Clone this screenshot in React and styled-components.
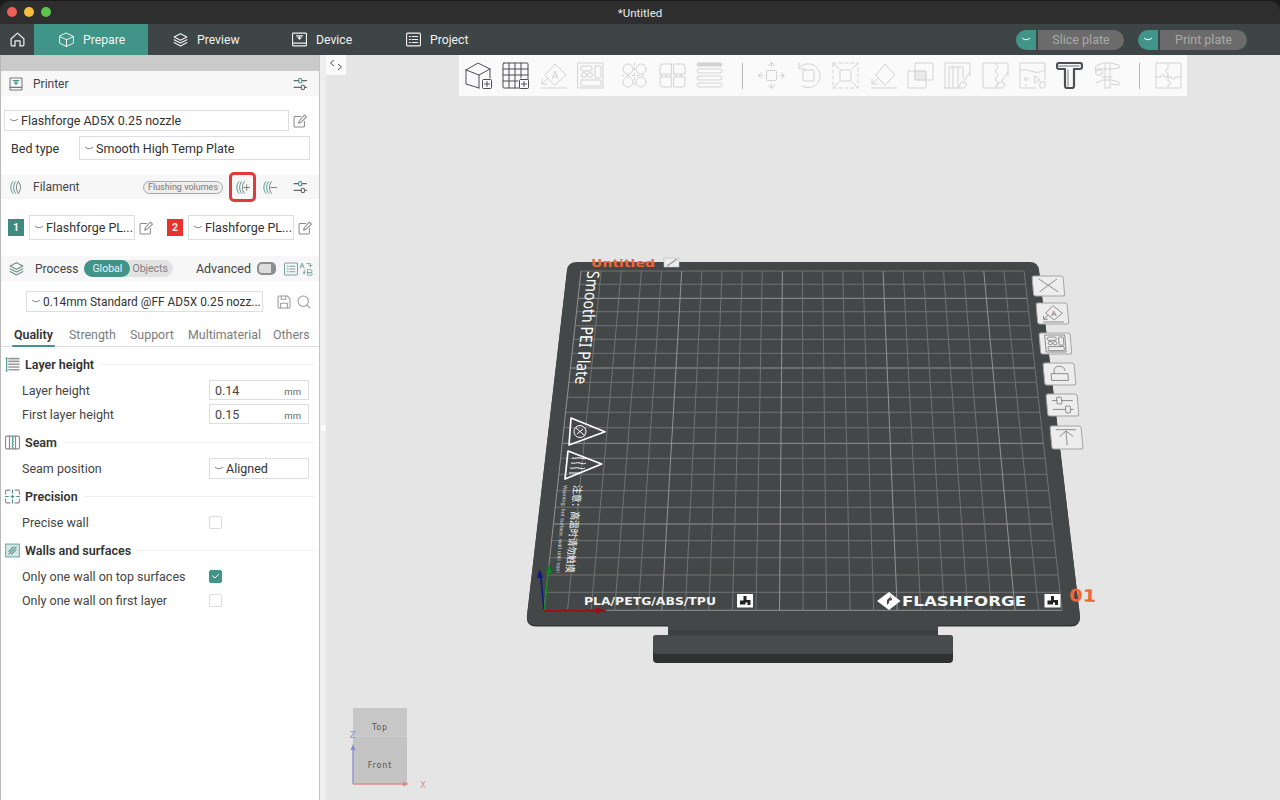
import React from "react";
import styled, { createGlobalStyle } from "styled-components";

const TEAL = "#419488";
const FONT = `Roboto, "Noto Sans", sans-serif`;

const GlobalStyle = createGlobalStyle`
  html, body { margin: 0; padding: 0; background: #1b1b1b; }
  body { font-family: ${FONT}; font-size: 12.5px; color: #333; }
`;

const Window = styled.div`
  width: 1280px;
  height: 800px;
  display: flex;
  flex-direction: column;
  overflow: hidden;
  background: #1b1b1b;
`;

/* title bar */
const TitleBar = styled.div`
  height: 23px;
  margin-top: 1px;
  flex: none;
  display: flex;
  align-items: center;
  justify-content: center;
  position: relative;
  background: #2e2e2e;
  border-radius: 10px 10px 0 0;
  color: #ececec;
  font-size: 11.5px;
`;
const Lights = styled.div`
  position: absolute;
  left: 7px;
  top: 6px;
  display: flex;
  gap: 7px;
`;
const Light = styled.span`
  width: 10px;
  height: 10px;
  border-radius: 50%;
  background: ${(p) => p.$c};
`;

/* nav bar */
const NavBar = styled.div`
  height: 31px;
  flex: none;
  display: flex;
  align-items: stretch;
  background: #3d4547;
  color: #f2f2f2;
`;
const HomeBtn = styled.div`
  width: 34px;
  display: flex;
  align-items: center;
  justify-content: center;
`;
const NavTab = styled.div`
  width: ${(p) => p.$w}px;
  display: flex;
  align-items: center;
  gap: 9px;
  padding-left: 25px;
  box-sizing: border-box;
  background: ${(p) => (p.$active ? TEAL : "transparent")};
  font-size: 12.2px;
`;
const NavActions = styled.div`
  margin-left: auto;
  padding-right: 33px;
  display: flex;
  align-items: center;
  gap: 14px;
`;
const SliceBtn = styled.div`
  display: flex;
  height: 20px;
  gap: 2px;
`;
const SliceDrop = styled.span`
  width: 20px;
  display: flex;
  align-items: center;
  justify-content: center;
  background: ${TEAL};
  border-radius: 10px 0 0 10px;
`;
const SliceLabel = styled.span`
  width: ${(p) => p.$w}px;
  display: flex;
  align-items: center;
  justify-content: center;
  background: #6b6b6b;
  color: #a9a9a9;
  border-radius: 0 10px 10px 0;
  font-size: 12.5px;
`;

/* body */
const Body = styled.div`
  flex: 1;
  display: flex;
  min-height: 0;
`;
const Panel = styled.aside`
  width: 320px;
  flex: none;
  box-sizing: border-box;
  background: #fff;
  border-left: 1px solid #b9b9b9;
  border-right: 1px solid #c4c4c4;
  display: flex;
  flex-direction: column;
`;
const TopStrip = styled.div`
  height: 16px;
  flex: none;
  background: #cacaca;
`;
const HeaderBar = styled.div`
  height: ${(p) => p.$h || 25}px;
  margin-top: ${(p) => p.$mt || 0}px;
  flex: none;
  display: flex;
  align-items: center;
  background: #f7f7f7;
  padding: 0 ${(p) => p.$pr || 12}px 0 8px;
  font-size: 12px;
  color: #444;
`;
const HeaderTitle = styled.span`
  margin-left: ${(p) => p.$ml || 11}px;
`;
const HeaderNote = styled.span`
  font-size: 12.5px;
`;
const Spacer = styled.span`
  flex: 1;
`;
const Row = styled.div`
  height: ${(p) => p.$h}px;
  margin-top: ${(p) => p.$mt || 0}px;
  padding-left: ${(p) => p.$pl || 0}px;
  flex: none;
  display: flex;
  align-items: center;
`;
const Select = styled.div`
  box-sizing: border-box;
  width: ${(p) => p.$w}px;
  height: ${(p) => p.$h || 21}px;
  margin-left: ${(p) => p.$ml || 0}px;
  flex: none;
  display: flex;
  align-items: center;
  gap: 2px;
  padding-left: 4px;
  border: 1px solid #dedede;
  background: #fff;
  color: #333;
  font-size: ${(p) => p.$fs || 12.5}px;
  white-space: nowrap;
  overflow: hidden;
`;
const BedLabel = styled.span`
  width: 68px;
  padding-left: 10px;
  box-sizing: border-box;
  flex: none;
  color: #333;
`;
const FlushPill = styled.span`
  box-sizing: border-box;
  width: 80px;
  height: 13px;
  display: flex;
  align-items: center;
  justify-content: center;
  border: 1px solid #a8a8a8;
  border-radius: 7px;
  background: #eee;
  color: #777;
  font-size: 9px;
  white-space: nowrap;
`;
const HighlightBtn = styled.span`
  box-sizing: border-box;
  width: 27px;
  height: 30px;
  margin-left: 6px;
  display: flex;
  align-items: center;
  justify-content: center;
  border: 3px solid #e23a3c;
  border-radius: 5px;
`;
const ColorBadge = styled.span`
  width: 16px;
  height: 17px;
  flex: none;
  display: flex;
  align-items: center;
  justify-content: center;
  background: ${(p) => p.$c};
  color: #f4f4f4;
  font-size: 10.5px;
  font-weight: 700;
  margin-left: ${(p) => p.$ml || 0}px;
`;
const ScopeSwitch = styled.span`
  width: 89px;
  height: 17px;
  margin-left: 6px;
  display: flex;
  align-items: center;
  border-radius: 9px;
  background: #e2e2e2;
  color: #808080;
  font-size: 10.5px;
`;
const ScopeOn = styled.span`
  width: 46px;
  height: 17px;
  display: flex;
  align-items: center;
  justify-content: center;
  border-radius: 9px;
  background: ${TEAL};
  color: #eef;
`;
const ScopeOff = styled.span`
  padding-left: 2px;
`;
const Toggle = styled.span`
  box-sizing: border-box;
  width: 19px;
  height: 13px;
  margin: 0 8px 0 6px;
  border-radius: 5px;
  background: #dcdcdc;
  border: solid #8e8e8e;
  border-width: 2px 5px 2px 2px;
`;
const Tabs = styled.div`
  box-sizing: border-box;
  height: 22px;
  margin-top: 13px;
  flex: none;
  border-bottom: 1px solid #dcdcdc;
  position: relative;
`;
const Tab = styled.span`
  position: absolute;
  left: ${(p) => p.$x}px;
  top: 0;
  height: 22px;
  color: ${(p) => (p.$active ? "#333" : "#7c7c7c")};
  font-weight: ${(p) => (p.$active ? 600 : 400)};
  font-size: 12.4px;
  line-height: 19px;
  ${(p) => p.$active && `&::after { content: ""; position: absolute; left: -2px; right: -2px; bottom: 0; height: 2px; background: ${TEAL}; border-radius: 1px; }`}
`;
const Group = styled.div`
  margin-top: ${(p) => p.$mt}px;
  flex: none;
`;
const GroupHead = styled.div`
  height: 18px;
  display: flex;
  align-items: center;
  gap: 5px;
  padding: 0 4px;
  margin-bottom: 5px;
  font-weight: 600;
  font-size: 12.5px;
  color: #333;
  &::after {
    content: "";
    flex: 1;
    height: 1px;
    background: #f0f0f0;
    margin-left: 1px;
  }
`;
const OptionRow = styled.div`
  height: 24px;
  display: flex;
  align-items: center;
  padding-left: 21px;
`;
const OptionLabel = styled.span`
  width: 187px;
  flex: none;
  color: #444;
  font-size: 12.5px;
`;
const NumberField = styled.span`
  box-sizing: border-box;
  width: 100px;
  height: 20px;
  display: flex;
  align-items: center;
  justify-content: space-between;
  padding: 0 7px 0 5px;
  border: 1px solid #dedede;
  color: #444;
`;
const Unit = styled.span`
  font-size: 9.5px;
  color: #666;
  margin-top: 3px;
`;
const CheckBox = styled.span`
  box-sizing: border-box;
  width: 13px;
  height: 13px;
  display: flex;
  align-items: center;
  justify-content: center;
  border-radius: 2px;
  border: 1px solid ${(p) => (p.$on ? TEAL : "#dcdcdc")};
  background: ${(p) => (p.$on ? TEAL : "#fff")};
`;

/* viewport */
const Sash = styled.div`
  width: 6px;
  flex: none;
  background: #eeeeee;
  display: flex;
  align-items: center;
  justify-content: center;
`;
const SashGrip = styled.span`
  width: 5px;
  height: 6px;
  background: #fbfbfb;
  border-radius: 1px;
`;
const Viewport = styled.main`
  flex: 1;
  position: relative;
  background: #e5e5e5;
`;
const Scene = styled.svg`
  position: absolute;
  left: -6px;
  top: 0;
  width: 960px;
  height: 745px;
  display: block;
`;
const CollapseBtn = styled.div`
  position: absolute;
  left: 0;
  top: 0;
  width: 20px;
  height: 20px;
  background: #fafafa;
  display: flex;
  align-items: center;
  justify-content: center;
`;
const Toolbar = styled.div`
  position: absolute;
  left: 133px;
  top: 0;
  width: 728px;
  height: 41px;
  display: flex;
  align-items: center;
  background: #fafafa;
  padding-left: 1px;
  box-sizing: border-box;
`;
const ToolSlot = styled.span`
  width: 37.3px;
  flex: none;
  display: flex;
  justify-content: center;
  color: ${(p) => (p.$on ? "#4a4f50" : "#d3d3d3")};
  margin-left: ${(p) => p.$ml || 0}px;
`;
const ToolSep = styled.span`
  width: 1px;
  height: 26px;
  flex: none;
  background: #b8b8b8;
  margin: 0 ${(p) => p.$mr}px 0 ${(p) => p.$ml}px;
`;
const IconGap = styled.span`
  margin-left: ${(p) => p.$ml || 4}px;
  display: flex;
`;
const SectionIcon = styled.span`
  width: 15px;
  height: 15px;
  flex: none;
  display: flex;
`;

/* icons */
const Ico = ({ s = 14, vb = 27, c = "#666", w = 2, children }) => (
  <svg width={s} height={s} viewBox={`0 0 ${vb} ${vb}`} fill="none" stroke={c} strokeWidth={w} strokeLinecap="round" strokeLinejoin="round" style={{ flex: "none", display: "block" }}>
    {children}
  </svg>
);
const Chevron = ({ c = "#888" }) => (
  <svg width="10" height="5" viewBox="0 0 10 5" fill="none" stroke={c} strokeWidth="1" style={{ flex: "none" }}>
    <path d="M1 1 Q5 4.5 9 1" />
  </svg>
);
const Sliders = () => (
  <Ico s={14}>
    <path d="M2 7h9M18 7h8M2 20h14M23 20h3" />
    <rect x="11" y="3" width="6" height="8" rx="2" stroke="#419488" />
    <rect x="16" y="16" width="6" height="8" rx="2" />
  </Ico>
);
const EditIco = () => (
  <Ico s={14} c="#8a8a8a">
    <path d="M22 14v9a2 2 0 0 1-2 2H4a2 2 0 0 1-2-2V7a2 2 0 0 1 2-2h11" />
    <path d="M11 18l1-5L22 2l4 4-11 10z" />
  </Ico>
);
const Filaments = ({ plus, minus }) => (
  <Ico s={15} c="#777" w={1.7}>
    <path d="M7 3C2 9 2 18 7 24" stroke="#419488" />
    <path d="M12 3C7 9 7 18 12 24" stroke="#419488" />
    <path d="M17 3c-5 6-5 15 0 21" />
    {plus && <path d="M16 13.5h10M21 8.5v10" />}
    {minus && <path d="M16 13.5h10" />}
    {!plus && !minus && <path d="M17 3c5 6 5 15 0 21" />}
  </Ico>
);

const CubeAdd = () => (
  <>
    <path d="M1 8L13 1l12 6v9M1 8l13 5v13M14 13l11-6M1 8v14l13 4" />
    <rect x="17.5" y="17.5" width="9" height="9" rx="1" fill="#fafafa" />
    <path d="M19.5 22h5M22 19.5v5" />
  </>
);
const GridAdd = () => (
  <>
    <rect x="1" y="1" width="25" height="25" rx="1" />
    <path d="M1 7h25M1 13h25M1 19h15M7 1v25M13 1v25M19 1v15" />
    <rect x="17.5" y="17.5" width="9" height="9" rx="1" fill="#fafafa" />
    <path d="M19.5 22h5M22 19.5v5" />
  </>
);
const Orient = () => (
  <>
    <path d="M5 13L15 2l11 11-11 10z" />
    <text x="15" y="17" fontSize="10" textAnchor="middle" fill="currentColor" stroke="none" fontFamily="Liberation Sans">A</text>
    <path d="M8 16l-6 6M2 17v5h5M1 26h26" />
  </>
);
const Arrange = () => (
  <>
    <rect x="1" y="1" width="25" height="25" />
    <rect x="4" y="4" width="11" height="5" rx="2" />
    <rect x="18" y="4" width="6" height="12" rx="1" />
    <circle cx="7" cy="13" r="2.5" />
    <circle cx="13" cy="13" r="2.5" />
    <rect x="4" y="18" width="20" height="6" rx="1" />
  </>
);
const SplitObjects = () => (
  <>
    <circle cx="7" cy="7" r="5" />
    <circle cx="20" cy="7" r="5" />
    <circle cx="7" cy="20" r="5" />
    <circle cx="20" cy="20" r="5" />
    <path d="M1 13.5h25M13.5 1v25" strokeDasharray="2 3" />
  </>
);
const SplitParts = () => (
  <>
    <path d="M12 2H4a3 3 0 0 0-3 3v7h11zM15 2h8a3 3 0 0 1 3 3v7H15zM12 15H1v7a3 3 0 0 0 3 3h8zM15 15h11v7a3 3 0 0 1-3 3h-8z" />
    <path d="M1 13.5h25" strokeDasharray="2 3" />
  </>
);
const LayerBars = () => (
  <>
    <rect x="1" y="1" width="25" height="3" rx="1.5" fill="currentColor" />
    <rect x="1" y="7" width="25" height="4" rx="2" />
    <rect x="1" y="14" width="25" height="4" rx="2" />
    <rect x="1" y="21" width="25" height="4" rx="2" />
  </>
);
const Move = () => (
  <>
    <rect x="8.5" y="8.5" width="10" height="10" rx="1" />
    <path d="M13.5 5V1M10.5 3.5l3-3 3 3M13.5 22v4M10.5 23.5l3 3 3-3M5 13.5H1M3.5 10.5l-3 3 3 3M22 13.5h4M23.5 10.5l3 3-3 3" />
  </>
);
const Rotate = () => (
  <>
    <path d="M4 6A12 12 0 1 1 7 24" />
    <path d="M3 19v0M1.5 14v0" strokeDasharray="1 3" />
    <path d="M4 1v6h6" />
    <rect x="8" y="8" width="11" height="11" rx="1" />
  </>
);
const Scale = () => (
  <>
    <rect x="8" y="8" width="11" height="11" rx="1" />
    <path d="M1 1h25v25H1z" strokeDasharray="3 3" />
    <path d="M1 1l6 6M26 1l-6 6M1 26l6-6M26 26l-6-6" />
  </>
);
const LayFlat = () => (
  <>
    <path d="M6 13L15 2l10 11-10 10z" />
    <path d="M8 16l-6 6M2 17v5h5M1 26h26" />
  </>
);
const Overlap = () => (
  <>
    <rect x="8" y="1" width="18" height="17" rx="1" />
    <rect x="1" y="9" width="18" height="17" rx="1" />
    <rect x="8" y="9" width="11" height="9" fill="currentColor" opacity=".4" />
  </>
);
const Brush = () => <path d="M26 10l-6 9M18 20c-2 1-2 4-4 6h6c2-1 3-3 2-5z" />;
const SupportPaint = () => (
  <>
    <path d="M1 26V1h25v13" />
    <path d="M5 26V5h14v12M9 5v21M14 5v21M1 26h13" />
    <Brush />
  </>
);
const SeamPaint = () => (
  <>
    <path d="M14 26H1V1h25v13" />
    <path d="M13 1l3 4-3 4 3 4-3 4 3 4-3 4" />
    <Brush />
  </>
);
const TerrainPaint = () => (
  <>
    <path d="M17 26H1V1h25v17" />
    <path d="M1 9c8-5 14 6 25-1" />
    <circle cx="7" cy="17" r="1.5" />
    <path d="M16 14l5 4-5 3zM6 23h2" />
    <rect x="21" y="20" width="5" height="6" rx="1" />
  </>
);
const TextTool = () => (
  <>
    <path d="M3 1h21a2 2 0 0 1 2 2v2a2 2 0 0 1-2 2h-6v17a2 2 0 0 1-2 2h-5a2 2 0 0 1-2-2V7H3a2 2 0 0 1-2-2V3a2 2 0 0 1 2-2z" strokeWidth="2.2" />
    <path d="M3 4h20M12 8v16" stroke="#9b9b9b" strokeWidth="1.3" />
  </>
);
const Caliper = () => (
  <>
    <path d="M3 4l7-3h8l8 2v3l-8 1H10L3 9zM3 21l7-3h8l8 2v3l-8-1" />
    <circle cx="6" cy="10" r="3.5" />
    <path d="M12 1v25M17 1v25M12 26h5M9 15h10" />
  </>
);
const Puzzle = () => (
  <>
    <rect x="1" y="1" width="25" height="25" rx="1" />
    <path d="M13 1v6c-3-1-3 5 0 4v4h4c-1 3 4 3 3 0h6M13 15H9c1-3-4-3-3 0H1M13 15v4c3-1 3 5 0 4v3" />
  </>
);
const XMark = () => <path d="M2 3l23 19M25 3L2 22" />;
const Lock = () => (
  <>
    <path d="M7 13V9a7 7 0 0 1 14 0" />
    <path d="M3 13h21v10H3z" />
  </>
);
const PlateSliders = () => (
  <>
    <path d="M1 7h6M13 7h14M1 20h16M23 20h4" />
    <rect x="7" y="2" width="6" height="10" rx="1" />
    <rect x="17" y="15" width="6" height="10" rx="1" />
  </>
);
const Upload = () => <path d="M1 2h25M13.5 25V4M5 12l8.5-8L22 12" />;

const TOOLS_A = [CubeAdd, GridAdd, Orient, Arrange];
const TOOLS_B = [SplitObjects, SplitParts, LayerBars];
const TOOLS_C = [Move, Rotate, Scale, LayFlat, Overlap, SupportPaint, SeamPaint, TerrainPaint, TextTool, Caliper];

const Tool = ({ icon: Icon, on, ml }) => (
  <ToolSlot $on={on} $ml={ml}>
    <svg width="27" height="27" viewBox="0 0 27 27" fill="none" stroke="currentColor" strokeWidth={1} strokeLinecap="round" strokeLinejoin="round" style={{ display: "block" }}>
      <Icon />
    </svg>
  </ToolSlot>
);

/* plate geometry, page coordinates */
const ROW_Y = [271, 284.3, 298.3, 311.7, 325.7, 339.3, 353.3, 368, 382.3, 397.3, 412.3, 427.7, 443.3, 458.3, 474.3, 490.7, 507.3, 524, 540.7, 557.7, 575, 592.3, 610.3];
const leftAt = (y) => 581 - ((y - 271) / 339) * 37;
const rightAt = (y) => 1024 + ((y - 271) / 339) * 38;

const PLATE_TABS = [
  [1032, 276, 20, XMark],
  [1036, 303, 21, Orient],
  [1039, 333, 21, Arrange],
  [1043, 363, 22, Lock],
  [1046, 394, 22, PlateSliders],
  [1050, 426, 23, Upload],
];
const PLATE_OUTLINE = "M577 262H1030Q1038 262 1039 270L1080 616Q1080 625 1071 625H536Q526 625 527 615L567 270Q568 262 577 262Z";

const QrMark = ({ x, y }) => (
  <g transform={`translate(${x} ${y})`}>
    <rect width="16" height="13.5" fill="#fff" />
    <path d="M6.5 2h3v4h4v5h-3V8.5h-2v2H3v-4h3.5z" fill="#222" />
  </g>
);

const PlateScene = () => (
  <Scene viewBox="320 55 960 745">
    {/* stand */}
    <rect x="653" y="635" width="300" height="28" rx="4" fill="#2f3030" />
    <rect x="653" y="635" width="300" height="19" rx="3" fill="#484b4b" />
    {/* plate */}
    <path d={PLATE_OUTLINE} transform="translate(0 1.5)" fill="#323434" />
    <path d={PLATE_OUTLINE} fill="#444747" />
    <rect x="668" y="620" width="270" height="15.5" fill="#444747" />
    <rect x="668" y="630" width="270" height="5.5" fill="#3d4040" />
    {ROW_Y.map((y, i) => (
      <line key={i} x1={leftAt(y)} y1={y} x2={rightAt(y)} y2={y} stroke={i % 5 === 2 ? "#929494" : "#707373"} strokeWidth="1" />
    ))}
    {Array.from({ length: 23 }, (_, i) => (
      <line key={i} x1={581 + i * 20.14} y1="271" x2={544 + i * 23.55} y2="610.3" stroke={i % 5 === 0 ? "#929494" : "#707373"} strokeWidth="1" />
    ))}
    {/* plate side tabs */}
    {PLATE_TABS.map(([x, y, h, Icon]) => (
      <g key={y} transform={`translate(${x} ${y}) skewX(5)`}>
        <rect width="31" height={h} rx="2" fill="#ededed" stroke="#a5a5a5" />
        <g transform={`translate(${(31 - 27 * 0.8) / 2} ${(h - 27 * 0.68) / 2}) scale(.8 .68)`} fill="none" stroke="#6e6e6e" strokeWidth="1" color="#6e6e6e">
          <Icon />
        </g>
      </g>
    ))}
    {/* printed labels */}
    <text x="591" y="267" fill="#f0683a" fontFamily="DejaVu Sans" fontWeight="700" fontSize="11" textLength="64" lengthAdjust="spacingAndGlyphs">Untitled</text>
    <g transform="translate(664 258)">
      <rect width="15" height="9" fill="#ededed" stroke="#bbb" strokeWidth=".6" />
      <path d="M3 8L13 1" stroke="#999" strokeWidth="1.5" />
    </g>
    <text transform="matrix(-.11 .994 -1 0 587.5 271)" fill="#fff" fontFamily="Noto Sans" fontSize="17" textLength="114" lengthAdjust="spacingAndGlyphs">Smooth PEI Plate</text>
    <path d="M571 418L605 431.7 569 445z" fill="none" stroke="#fff" strokeWidth="1.7" strokeLinejoin="round" />
    <circle cx="580" cy="431.5" r="6" fill="none" stroke="#fff" />
    <path d="M576 428l8 7M577 434l6-5" stroke="#fff" />
    <path d="M568 451L601.7 464 565 479z" fill="none" stroke="#fff" strokeWidth="1.7" strokeLinejoin="round" />
    <path d="M572 458c3 1 6-1 9 0s4 1 6 0M571 463c3 1 6-1 9 0s4 1 6 0M570 468c3 1 6-1 9 0s4 1 6 0M569 473h11" fill="none" stroke="#fff" />
    <text transform="matrix(-.09 .996 -1 0 574 485)" fill="#f5f5f5" fontFamily="Noto Sans CJK SC" fontSize="10.5" textLength="88" lengthAdjust="spacingAndGlyphs">注意：高温时请勿触摸</text>
    <text transform="matrix(-.085 .996 -1 0 563.5 485)" fill="#d5d5d5" fontFamily="Liberation Sans" fontSize="5.5" textLength="88" lengthAdjust="spacingAndGlyphs">Warning: hot surface, wait until cool</text>
    <text x="584" y="605" fill="#f2f2f2" fontFamily="DejaVu Sans" fontWeight="700" fontSize="10.5" textLength="132" lengthAdjust="spacingAndGlyphs">PLA/PETG/ABS/TPU</text>
    <QrMark x="737" y="594" />
    <QrMark x="1044.5" y="594" />
    <path d="M889 592L900.5 601 889 610 877 601z" fill="#fff" />
    <path d="M892 595l-5 5v5l2-2v-2l3-1v-2l-2 .5z" fill="#444747" />
    <text x="902" y="606" fill="#f5f5f5" fontFamily="DejaVu Sans" fontWeight="700" fontSize="13.5" textLength="124" lengthAdjust="spacingAndGlyphs">FLASHFORGE</text>
    <text transform="translate(1069 601) rotate(2)" fill="#f0683a" fontFamily="DejaVu Sans" fontWeight="700" fontSize="17" textLength="27" lengthAdjust="spacingAndGlyphs">01</text>
    {/* bed axes */}
    <path d="M544 610.5H600" stroke="#9a0f14" strokeWidth="1.8" />
    <path d="M607 610.5L596 607.5V613.5z" fill="#9a0f14" />
    <path d="M544 610L540.5 575" stroke="#0c1a80" strokeWidth="1.5" />
    <path d="M539.5 569L537 578H543z" fill="#0c1a80" />
    <path d="M544.5 610L548.5 570" stroke="#0b8a1f" strokeWidth="1.5" />
    <path d="M549 564L546 573H552z" fill="#0b8a1f" />
    {/* view cube */}
    <rect x="353" y="708" width="54" height="28.5" fill="#c7c7c7" />
    <rect x="353" y="736.5" width="54" height="47" fill="#c4c4c4" />
    <text x="380" y="730" textAnchor="middle" fontFamily="DejaVu Sans" fontSize="8" fill="#555" letterSpacing=".9">Top</text>
    <text x="380" y="768" textAnchor="middle" fontFamily="DejaVu Sans" fontSize="8" fill="#555" letterSpacing=".9">Front</text>
    <path d="M353 784V747" stroke="#8a8ed0" strokeWidth="1.3" />
    <path d="M353 744l-2.5 6h5z" fill="#8a8ed0" />
    <path d="M353 784H405" stroke="#d98a8a" strokeWidth="1.3" />
    <path d="M409 784l-6-2.5v5z" fill="#d98a8a" />
    <text x="352.5" y="738" textAnchor="middle" fontFamily="DejaVu Sans" fontSize="8" fill="#8a8ed0">Z</text>
    <text x="423" y="788" textAnchor="middle" fontFamily="DejaVu Sans" fontSize="8" fill="#d98a8a">X</text>
  </Scene>
);

const LayersGlyph = ({ c }) => (
  <Ico s={15} c={c}>
    <path d="M13.5 3L25 9l-11.5 6L2 9z" />
    <path d="M2 14l11.5 6L25 14M2 19l11.5 6L25 19" />
  </Ico>
);

const FilamentSlot = ({ n, color, ml, left }) => (
  <>
    <ColorBadge $c={color} $ml={ml}>{n}</ColorBadge>
    <Select $w={106} $h={25} $ml={left}>
      <Chevron />
      <span>Flashforge PL...</span>
    </Select>
    <IconGap><EditIco /></IconGap>
  </>
);

const App = () => (
  <Window>
    <GlobalStyle />
    <TitleBar>
      <Lights>
        <Light $c="#ee5f57" />
        <Light $c="#f6bd3b" />
        <Light $c="#5fc44f" />
      </Lights>
      *Untitled
    </TitleBar>

    <NavBar>
      <HomeBtn>
        <Ico s={15} c="#f0f0f0" w={2.2}>
          <path d="M2 12L13.5 2 25 12v11a2 2 0 0 1-2 2h-5v-9H9v9H4a2 2 0 0 1-2-2z" />
        </Ico>
      </HomeBtn>
      <NavTab $active $w={114}>
        <Ico s={15} c="#f3f3f3" w={1.8}>
          <path d="M13.5 2L26 8v12l-12.5 6L1 20V8zM1 8l12.5 6L26 8M13.5 14v12" />
        </Ico>
        Prepare
      </NavTab>
      <NavTab $w={119}>
        <LayersGlyph c="#f0f0f0" />
        Preview
      </NavTab>
      <NavTab $w={114}>
        <Ico s={15} c="#f0f0f0" w={2}>
          <rect x="1" y="2" width="25" height="23" rx="1" />
          <path d="M1 20h25M8 7h11M13.5 7v6l-3-3M13.5 13l3-3" />
        </Ico>
        Device
      </NavTab>
      <NavTab $w={120}>
        <Ico s={15} c="#f0f0f0" w={2}>
          <rect x="1" y="2" width="25" height="23" rx="2" />
          <path d="M6 8h2M11 8h10M6 13.5h2M11 13.5h10M6 19h2M11 19h10" />
        </Ico>
        Project
      </NavTab>
      <NavActions>
        <SliceBtn>
          <SliceDrop><Chevron c="#fff" /></SliceDrop>
          <SliceLabel $w={86}>Slice plate</SliceLabel>
        </SliceBtn>
        <SliceBtn>
          <SliceDrop><Chevron c="#fff" /></SliceDrop>
          <SliceLabel $w={87}>Print plate</SliceLabel>
        </SliceBtn>
      </NavActions>
    </NavBar>

    <Body>
      <Panel>
        <TopStrip />
        <HeaderBar>
          <Ico s={14} c="#777">
            <rect x="2" y="2" width="23" height="23" rx="1" />
            <path d="M2 20h23" />
            <path d="M8 7h11M13.5 7v7l-3-3M13.5 14l3-3" stroke="#419488" />
          </Ico>
          <HeaderTitle $ml={10}>Printer</HeaderTitle>
          <Spacer />
          <Sliders />
        </HeaderBar>

        <Row $h={21} $mt={14} $pl={3}>
          <Select $w={285}>
            <Chevron />
            <span>Flashforge AD5X 0.25 nozzle</span>
          </Select>
          <IconGap><EditIco /></IconGap>
        </Row>
        <Row $h={24} $mt={5}>
          <BedLabel>Bed type</BedLabel>
          <Select $w={231} $h={24} $ml={10}>
            <Chevron />
            <span>Smooth High Temp Plate</span>
          </Select>
        </Row>

        <HeaderBar $h={24} $mt={15}>
          <Filaments />
          <HeaderTitle $ml={9}>Filament</HeaderTitle>
          <Spacer />
          <FlushPill>Flushing volumes</FlushPill>
          <HighlightBtn><Filaments plus /></HighlightBtn>
          <IconGap $ml={6}><Filaments minus /></IconGap>
          <IconGap $ml={16}><Sliders /></IconGap>
        </HeaderBar>

        <Row $h={25} $mt={16} $pl={7}>
          <FilamentSlot n="1" color="#3f8a80" left={5} />
          <FilamentSlot n="2" color="#e8322b" ml={14} left={5} />
        </Row>

        <HeaderBar $mt={16} $pr={6}>
          <LayersGlyph c="#6d8f8a" />
          <HeaderTitle $ml={11}>Process</HeaderTitle>
          <ScopeSwitch>
            <ScopeOn>Global</ScopeOn>
            <ScopeOff>Objects</ScopeOff>
          </ScopeSwitch>
          <Spacer />
          <HeaderNote>Advanced</HeaderNote>
          <Toggle />
          <Ico s={14} c="#7aa49e">
            <rect x="1" y="2" width="25" height="23" rx="2" />
            <path d="M6 8h2M11 8h10M6 13.5h2M11 13.5h10M6 19h2M11 19h10" />
          </Ico>
          <IconGap $ml={1}>
            <Ico s={14} c="#7aa49e" w={1.7}>
              <path d="M2 12L6 2l4 10M3.5 8h5M15 3h7v6M19 6l3 3 3-3M12 17h-2v6M8 20l2 3 2-3" />
              <path d="M17 15h5a2.5 2.5 0 0 1 0 6h-5zM17 21h6a2.5 2.5 0 0 1 0 5h-6z" transform="translate(0 -.5)" />
            </Ico>
          </IconGap>
        </HeaderBar>

        <Row $h={21} $mt={10} $pl={25}>
          <Select $w={237} $fs={11.9}>
            <Chevron />
            <span>0.14mm Standard @FF AD5X 0.25 nozz...</span>
          </Select>
          <IconGap $ml={14}>
            <Ico s={14} c="#9a9a9a">
              <path d="M2 4a2 2 0 0 1 2-2h16l5 5v16a2 2 0 0 1-2 2H4a2 2 0 0 1-2-2z" />
              <path d="M8 2v6h9V2M7 25v-9h13v9" />
            </Ico>
          </IconGap>
          <IconGap $ml={6}>
            <Ico s={14} c="#9a9a9a">
              <circle cx="12" cy="12" r="10" />
              <path d="M20 20l5 5" />
            </Ico>
          </IconGap>
        </Row>

        <Tabs>
          <Tab $x={13} $active>Quality</Tab>
          <Tab $x={68}>Strength</Tab>
          <Tab $x={129}>Support</Tab>
          <Tab $x={187}>Multimaterial</Tab>
          <Tab $x={272}>Others</Tab>
        </Tabs>

        <Group $mt={8}>
          <GroupHead>
            <SectionIcon>
              <Ico s={15} c="#9a9a9a">
                <path d="M7 3h18M7 8h18M7 13h18M7 18h18M7 23h18" strokeWidth="3" />
                <path d="M2 2h2M2 25h2M3 2v23" stroke="#419488" />
              </Ico>
            </SectionIcon>
            Layer height
          </GroupHead>
          <OptionRow>
            <OptionLabel>Layer height</OptionLabel>
            <NumberField>0.14<Unit>mm</Unit></NumberField>
          </OptionRow>
          <OptionRow>
            <OptionLabel>First layer height</OptionLabel>
            <NumberField>0.15<Unit>mm</Unit></NumberField>
          </OptionRow>
        </Group>

        <Group $mt={7}>
          <GroupHead>
            <SectionIcon>
              <Ico s={15} c="#8a8a8a">
                <rect x="1" y="2" width="25" height="23" rx="2" />
                <path d="M8 2v23M19 2v23" />
                <path d="M13 3l2 3-2 3 2 3-2 3 2 3-2 3 2 3" stroke="#419488" />
              </Ico>
            </SectionIcon>
            Seam
          </GroupHead>
          <OptionRow>
            <OptionLabel>Seam position</OptionLabel>
            <Select $w={100}>
              <Chevron />
              <span>Aligned</span>
            </Select>
          </OptionRow>
        </Group>

        <Group $mt={7}>
          <GroupHead>
            <SectionIcon>
              <Ico s={15} c="#8a8a8a">
                <path d="M1 9V4a2 2 0 0 1 2-2h6M18 2h6a2 2 0 0 1 2 2v5M26 18v5a2 2 0 0 1-2 2h-6M9 25H3a2 2 0 0 1-2-2v-5" />
                <path d="M13.5 2v5M13.5 20v5M1 13.5h5M21 13.5h5M13.5 11v5M11 13.5h5" stroke="#419488" />
              </Ico>
            </SectionIcon>
            Precision
          </GroupHead>
          <OptionRow>
            <OptionLabel>Precise wall</OptionLabel>
            <CheckBox />
          </OptionRow>
        </Group>

        <Group $mt={7}>
          <GroupHead>
            <SectionIcon>
              <Ico s={15} c="#7ab5ac">
                <rect x="1" y="2" width="25" height="23" fill="#d5e8e5" />
                <path d="M7 20L20 7M12 20L20 12M7 15L15 7" stroke="#5d8f88" />
              </Ico>
            </SectionIcon>
            Walls and surfaces
          </GroupHead>
          <OptionRow>
            <OptionLabel>Only one wall on top surfaces</OptionLabel>
            <CheckBox $on>
              <svg width="9" height="6" viewBox="0 0 9 6" fill="none" stroke="#fff" strokeWidth="1"><path d="M1 2.5L4 5l4-4" /></svg>
            </CheckBox>
          </OptionRow>
          <OptionRow>
            <OptionLabel>Only one wall on first layer</OptionLabel>
            <CheckBox />
          </OptionRow>
        </Group>
      </Panel>

      <Sash><SashGrip /></Sash>

      <Viewport>
        <PlateScene />
        <CollapseBtn>
          <svg width="14" height="14" viewBox="0 0 14 14" fill="none" stroke="#555" strokeWidth="1">
            <path d="M5 2L1.5 5 5 8M9 6l3.5 3L9 12" />
          </svg>
        </CollapseBtn>
        <Toolbar>
          {TOOLS_A.map((t, i) => <Tool key={i} icon={t} on={i < 2} />)}
          {TOOLS_B.map((t, i) => <Tool key={i} icon={t} ml={i === 0 ? 7 : 0} />)}
          <ToolSep $ml={14} $mr={9.5} />
          {TOOLS_C.map((t, i) => <Tool key={i} icon={t} on={t === TextTool} />)}
          <ToolSep $ml={13} $mr={10} />
          <Tool icon={Puzzle} />
        </Toolbar>
      </Viewport>
    </Body>
  </Window>
);

export default App;
